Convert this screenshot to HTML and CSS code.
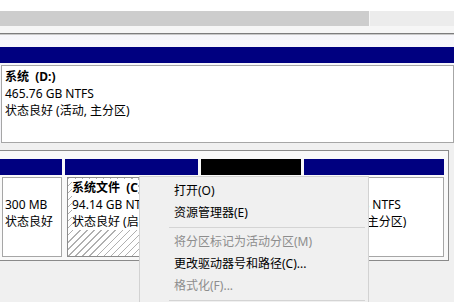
FILE: index.html
```html
<!DOCTYPE html>
<html lang="zh-CN">
<head>
<meta charset="utf-8">
<title>磁盘管理</title>
<link rel="stylesheet" href="styles.css">
</head>
<body>
<div class="screen">
  <div class="top-white"></div>
  <div class="hscroll">
    <div class="hscroll-thumb"></div>
    <div class="hscroll-track"></div>
  </div>
  <div class="disk-d">
    <div class="disk-d-gap"></div>
    <div class="disk-d-frame">
      <div class="disk-d-inner">
        <div class="hdr navy"></div>
        <div class="part part-d">
          <div class="line bold">系统&nbsp;&nbsp;(D:)</div>
          <div class="line">465.76 GB NTFS</div>
          <div class="line">状态良好 (活动, 主分区)</div>
        </div>
      </div>
    </div>
  </div>
  <div class="disk-c">
    <div class="segs">
      <div class="seg seg-1">
        <div class="hdr navy"></div>
        <div class="part">
          <div class="line">&nbsp;</div>
          <div class="line">300 MB</div>
          <div class="line">状态良好</div>
        </div>
      </div>
      <div class="seg seg-2">
        <div class="hdr navy"></div>
        <div class="part hatched">
          <div class="line"><span class="txt bold">系统文件&nbsp;&nbsp;(C</span></div>
          <div class="line"><span class="txt">94.14 GB NT</span></div>
          <div class="line"><span class="txt">状态良好 (启</span></div>
        </div>
      </div>
      <div class="seg seg-3">
        <div class="hdr black"></div>
        <div class="part"></div>
      </div>
      <div class="seg seg-4">
        <div class="hdr navy"></div>
        <div class="part part-4">
          <div class="line">&nbsp;</div>
          <div class="line">371.51 GB NTFS</div>
          <div class="line">状态良好 (主分区)</div>
        </div>
      </div>
    </div>
  </div>

  <div class="menu">
    <div class="item">打开(O)</div>
    <div class="item">资源管理器(E)</div>
    <div class="sep"></div>
    <div class="item disabled">将分区标记为活动分区(M)</div>
    <div class="item">更改驱动器号和路径(C)...</div>
    <div class="item disabled">格式化(F)...</div>
    <div class="sep"></div>
  </div>
</div>
</body>
</html>
```

FILE: styles.css
```css
html, body {
  margin: 0;
  padding: 0;
}

.screen {
  position: relative;
  width: 454px;
  height: 302px;
  overflow: hidden;
  background: #f0f0f0;
  color: #000;
  font-family: "Noto Sans", "Noto Sans CJK SC", sans-serif;
  font-size: 12px;
  line-height: 17px;
}

.top-white {
  height: 11px;
  background: #ffffff;
}

.hscroll {
  display: flex;
  height: 15px;
}

.hscroll-thumb {
  width: 369px;
  background: #cdcdcd;
  border-right: 1px solid #f7f7f7;
}

.hscroll-track {
  flex: 1;
  background: #ececec;
}

.disk-d-gap {
  height: 7px;
  background: #f6f6f6;
}

.disk-d-frame {
  border-top: 1px solid #7d7d7d;
}

.disk-d-inner {
  border-top: 1px solid #c9c9c9;
  padding-top: 12px;
  background: linear-gradient(#f7f7fb, #f3f3f8);
}

.hdr {
  height: 16px;
}

.navy {
  background: #000080;
}

.black {
  background: #000000;
}

.part {
  margin-top: 2px;
  margin-left: 2px;
  border: 1px solid #a6a6a6;
  background: #ffffff;
  padding: 1px 0 0 2px;
  box-sizing: border-box;
  white-space: nowrap;
  overflow: hidden;
}

.part-d {
  margin-left: 1px;
  height: 78px;
  padding-left: 3px;
  padding-top: 2px;
}

.line {
  height: 17px;
}

.bold {
  font-weight: bold;
}

.disk-c {
  margin-top: 7px;
  width: 448px;
  border-top: 1px solid #8a8a8a;
  border-right: 1px solid #8a8a8a;
  border-bottom: 1px solid #8a8a8a;
  background: #f9f9f9;
  padding-top: 8px;
  padding-bottom: 3px;
}

.segs {
  display: flex;
  gap: 3px;
}

.seg {
  display: flex;
  flex-direction: column;
  flex: none;
}

.seg .part {
  height: 80px;
}

.seg-1 { width: 62px; }
.seg-2 { width: 133px; }
.seg-3 { width: 100px; }
.seg-4 { width: 140px; }

.hatched {
  padding-left: 4px;
  border-color: #8c8c8c;
  background: repeating-linear-gradient(135deg, #b0b0b0 0 1px, #ffffff 1px 5px);
}

.txt {
  background: #ffffff;
}

.part-4 {
  padding-left: 5px;
}

.menu {
  position: absolute;
  left: 139px;
  top: 176px;
  width: 230px;
  height: 150px;
  box-sizing: border-box;
  background: #f0f0f0;
  border: 1px solid #d2d2d2;
  padding: 3px 2px;
}

.item {
  height: 22px;
  line-height: 22px;
  padding-left: 32px;
  white-space: nowrap;
}

.item.disabled {
  color: #8d8d8d;
}

.sep {
  height: 1px;
  margin: 3px 1px 3px 27px;
  background: #d4d4d4;
}
```
